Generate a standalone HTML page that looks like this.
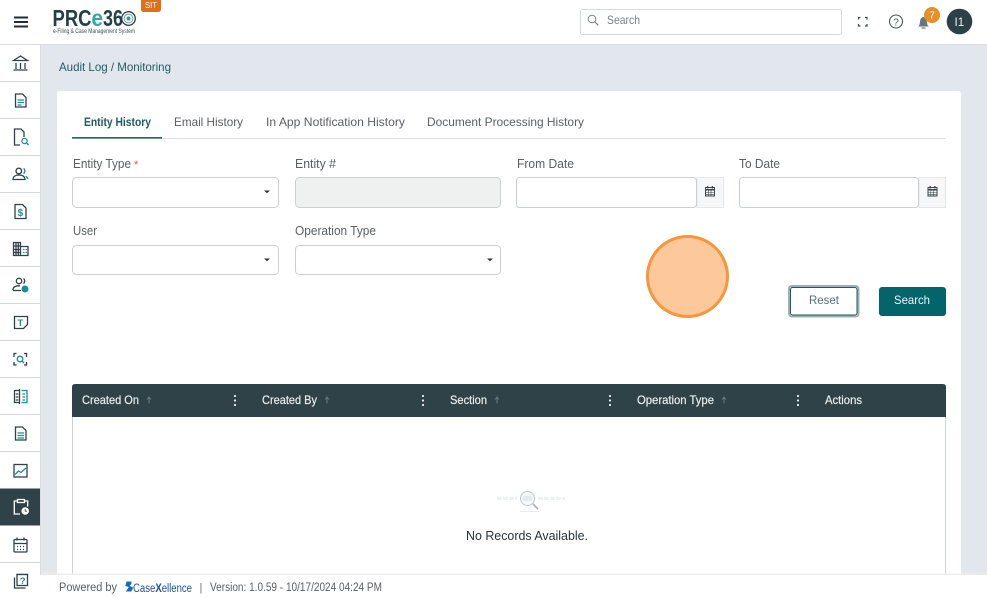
<!DOCTYPE html>
<html><head><meta charset="utf-8"><title>Audit Log / Monitoring</title>
<style>
html,body{margin:0;padding:0;width:987px;height:599px;overflow:hidden;background:#fff}
svg{display:block}
text{font-family:"Liberation Sans",sans-serif}
.l{font-size:12.500px;fill:#5a6063}
.h{font-size:12px;fill:#e8eeee;stroke:#e8eeee;stroke-width:.2}
.i{fill:none;stroke:#2f4247;stroke-width:1.300}
.t{fill:none;stroke:#178f96;stroke-width:1.300}
</style></head><body>
<svg width="987" height="599" viewBox="0 0 987 599" xmlns="http://www.w3.org/2000/svg">
<defs><linearGradient id="fs" x1="0" y1="0" x2="0" y2="1"><stop offset="0" stop-color="#fff" stop-opacity="0"/><stop offset="1" stop-color="#e3e5e8"/></linearGradient></defs>
<rect width="987" height="599" fill="#e2e6ed"/>
<!-- header -->
<rect width="987" height="44" fill="#fff"/><rect y="44" width="987" height="1" fill="#d9dde2"/>
<path d="M14 17.500h14M14 22h14M14 26.500h14" stroke="#222e33" stroke-width="1.900"/>
<text x="52.500" y="26" font-size="23" font-weight="700" fill="#21404a" textLength="39" lengthAdjust="spacingAndGlyphs">PRC</text>
<text x="91.500" y="26" font-size="23" font-weight="700" fill="#31a6a6" textLength="11.500" lengthAdjust="spacingAndGlyphs">e</text>
<text x="103" y="26" font-size="23" font-weight="700" fill="#21404a" textLength="20" lengthAdjust="spacingAndGlyphs">36</text>
<circle cx="128.500" cy="18.500" r="6.800" fill="none" stroke="#21404a" stroke-width="1.300"/><circle cx="128.500" cy="18.500" r="4.400" fill="none" stroke="#7d9ca3" stroke-width="1"/><circle cx="128.500" cy="18.500" r="2.100" fill="#2e9b9d"/>
<text x="53" y="33" font-size="6" fill="#3a5258" textLength="82" lengthAdjust="spacingAndGlyphs">e-Filing &amp; Case Management System</text>
<path d="M141 0h20v9q0 3-3 3h-14q-3 0-3-3z" fill="#df6f1b"/>
<text x="145" y="8" font-size="8" fill="#fff" textLength="12" lengthAdjust="spacingAndGlyphs">SIT</text>
<rect x="580.500" y="9.500" width="261" height="25" rx="2" fill="#fff" stroke="#d6dadd"/>
<circle cx="592" cy="19" r="3.800" fill="none" stroke="#7b8285" stroke-width="1"/><path d="M594.800 21.800l3.500 3.500" stroke="#7b8285" stroke-width="1.200"/>
<text x="607" y="24" font-size="12" fill="#7c7f82" textLength="33" lengthAdjust="spacingAndGlyphs">Search</text>
<path d="M858.500 19.500v-2h2M865 17.500h2v2M867 24v2h-2M860.500 26h-2v-2" fill="none" stroke="#3c4a4f" stroke-width="1.200"/>
<circle cx="896" cy="21.500" r="6.500" fill="none" stroke="#47545a" stroke-width="1.100"/>
<text x="893.300" y="25.300" font-size="10" fill="#47545a">?</text>
<path d="M918 26.500c1.800-1 1.800-3 2-5 .3-2.700 1.800-4.500 3.500-4.500s3.200 1.800 3.500 4.500c.2 2 .2 4 2 5z" fill="#66767c"/><path d="M921.500 28h4" stroke="#66767c" stroke-width="1.200"/>
<circle cx="932" cy="15" r="8" fill="#ea8f25"/><text x="929.300" y="18.500" font-size="10" fill="#fff">7</text>
<circle cx="959.500" cy="21.500" r="12.800" fill="#2b4047"/><text x="954.500" y="26" font-size="11.500" fill="#eef2f2">I1</text>
<!-- sidebar -->
<rect y="45" width="40" height="554" fill="#fff"/><rect x="40" y="45" width="1" height="530" fill="#d8dde3"/>
<path d="M0 81.500h40M0 118.500h40M0 155.500h40M0 192.500h40M0 229.500h40M0 266.500h40M0 303.500h40M0 340.500h40M0 377.500h40M0 414.500h40M0 451.500h40M0 562.500h40" stroke="#d5d8da"/>
<rect y="488.500" width="40" height="37" fill="#2f4247"/>
<path class="i" d="M13.500 60.500L20.500 56l7 4.500zM16 63v6M20.500 63v6M25 63v6M13.500 70h14"/>
<path class="i" d="M15.500 94h7l3.500 3.500V107h-10.500z"/><path class="t" d="M17.500 100h6.500M17.500 102.500h6.500M17.500 105h4"/>
<path class="i" d="M24 137v-5l-3-3h-6.500v16H20"/><circle cx="24.500" cy="141" r="2.600" fill="none" stroke="#178f96" stroke-width="1.300"/><path d="M26.500 143l2 2" stroke="#178f96" stroke-width="1.300"/>
<circle cx="18.800" cy="171" r="2.800" class="i"/><path class="i" d="M13 179.500c0-3 2.500-4.500 6-4.500s5.800 1.500 6 4.500z"/><path class="t" d="M23.500 168.500c1.800.8 1.800 4 0 5M26 176l2 3"/>
<path class="i" d="M15 204.500h7.500l3.500 3.500v10.500H15z"/><text x="17.500" y="216" font-size="10" font-weight="700" fill="#178f96">$</text>
<path class="i" d="M13.500 242.500h7v13h-7zM20.500 246.500h7.500v9h-7.500M16 243v12M18.300 243v12M13.500 246h7M13.500 249.500h7M13.500 252.500h7"/><path class="t" d="M23 249.500h1.500M25.500 249.500H27M23 252.500h1.500M25.500 252.500H27"/>
<circle cx="19" cy="281" r="2.700" class="i"/><path class="i" d="M13 290c0-3 3-4.300 7-4.300M13 290.500h8"/><path class="i" d="M23.500 278.500c1.500 1 1.500 4 0 5"/><circle cx="25" cy="289" r="3.500" fill="#178f96"/>
<path class="i" d="M14.500 316.500h13v8l-4 4h-9z"/><text x="17.500" y="326" font-size="9.500" font-weight="700" fill="#178f96">T</text>
<path class="i" d="M16.500 353.500h-2.500v3.500M24 353.500h2.500v3.500M14 362v3h2.500M26.500 362v3H24" stroke-width="1.500"/><circle cx="20" cy="359" r="2.800" fill="none" stroke="#178f96" stroke-width="1.300"/><path d="M22 361l2 2" stroke="#178f96" stroke-width="1.300"/>
<path class="i" d="M19.500 390.500h-5v12h5M19.500 389v15"/><path class="t" d="M21.500 390.500h5.500v12h-5.500"/><path class="i" d="M15.800 394h2.500M15.800 397h2.500M15.800 400h2.500"/><path class="t" d="M22.500 394H25M22.500 397H25M22.500 400H25"/>
<path class="i" d="M15.500 427h7l3.500 3.500V440h-10.500z"/><path class="t" d="M17.500 433h6.500M17.500 435.500h6.500M17.500 438h6.500"/>
<rect x="14" y="464.500" width="13" height="12.500" class="i"/><path class="t" d="M15 474.500l3.500-3.500 2.500 1.500 5-4.500"/>
<path d="M17 501h-2.700v13H20M25 501h2.700v5.500M17.500 499.500h7v3h-7z" fill="none" stroke="#fff" stroke-width="1.300"/><circle cx="25.200" cy="511" r="3.800" fill="#fff"/><path d="M25.200 509v2.200h1.700" fill="none" stroke="#2f4247" stroke-width=".8"/>
<rect x="14" y="539.500" width="13" height="12.500" rx="1" class="i"/><path class="i" d="M14 543.500h13M17 537.500v3M24 537.500v3M17 546.500h1M20 546.500h1M23 546.500h1M17 549.500h1M20 549.500h1M23 549.500h1"/>
<rect x="17" y="574.500" width="10.500" height="11" class="i"/><path class="i" d="M14.500 577.500v10.500h11"/><text x="19.800" y="584" font-size="9.500" font-weight="700" fill="#178f96">?</text>
<!-- content -->
<text x="59" y="71" font-size="12" fill="#1f5c66" textLength="112" lengthAdjust="spacingAndGlyphs">Audit Log / Monitoring</text>
<rect x="57" y="91" width="904" height="520" rx="3" fill="#fff"/>
<!-- tabs -->
<rect x="72" y="138" width="874" height="1" fill="#dfe3e5"/><rect x="72" y="137" width="90" height="1.600" fill="#1d6a6c"/>
<text x="84" y="126" font-size="12" font-weight="700" fill="#1f5c5f" textLength="67" lengthAdjust="spacingAndGlyphs">Entity History</text>
<text x="174" y="126" font-size="12" fill="#5a6063" textLength="69" lengthAdjust="spacingAndGlyphs">Email History</text>
<text x="266" y="126" font-size="12" fill="#5a6063" textLength="139" lengthAdjust="spacingAndGlyphs">In App Notification History</text>
<text x="427" y="126" font-size="12" fill="#5a6063" textLength="157" lengthAdjust="spacingAndGlyphs">Document Processing History</text>
<!-- labels -->
<text class="l" x="73" y="168" textLength="58" lengthAdjust="spacingAndGlyphs">Entity Type</text><text x="134" y="168" font-size="11" fill="#d9534f">*</text>
<text class="l" x="295" y="168" textLength="41" lengthAdjust="spacingAndGlyphs">Entity #</text>
<text class="l" x="517" y="168" textLength="57" lengthAdjust="spacingAndGlyphs">From Date</text>
<text class="l" x="739" y="168" textLength="41" lengthAdjust="spacingAndGlyphs">To Date</text>
<text class="l" x="73" y="235" textLength="24" lengthAdjust="spacingAndGlyphs">User</text>
<text class="l" x="295" y="235" textLength="81" lengthAdjust="spacingAndGlyphs">Operation Type</text>
<!-- inputs -->
<g stroke="#ccd0d2" fill="#fff">
<rect x="72.500" y="177.500" width="206" height="30" rx="4"/>
<rect x="295.500" y="177.500" width="205" height="30" rx="4" fill="#eff0f0"/>
<rect x="72.500" y="245.500" width="206" height="29" rx="4"/>
<rect x="295.500" y="245.500" width="205" height="29" rx="4"/>
<rect x="697" y="177.500" width="26.500" height="30" fill="#f6f7f9" stroke="#e4e7ea"/>
<rect x="919" y="177.500" width="26.500" height="30" fill="#f6f7f9" stroke="#e4e7ea"/>
<rect x="516.500" y="177.500" width="180" height="30" rx="3"/>
<rect x="739.500" y="177.500" width="179" height="30" rx="3"/>
</g>
<path d="M264 190.500h6l-3 2.800zM264 258.500h6l-3 2.800zM487 258.500h6l-3 2.800z" fill="#2b3336"/>
<g><path d="M705.500 187.500h9v8.500h-9z" fill="none" stroke="#3d474b"/><path d="M705.500 189h9v1.500h-9zM707 186h1.300v2.500H707zM711.700 186h1.300v2.500h-1.300z" fill="#3d474b"/><path d="M705.500 192.500h9M705.500 194.300h9M708.300 190.500v5.500M711 190.500v5.500" stroke="#3d474b" stroke-width=".6"/></g>
<g transform="translate(222.500 0)"><path d="M705.500 187.500h9v8.500h-9z" fill="none" stroke="#3d474b"/><path d="M705.500 189h9v1.500h-9zM707 186h1.300v2.500H707zM711.700 186h1.300v2.500h-1.300z" fill="#3d474b"/><path d="M705.500 192.500h9M705.500 194.300h9M708.300 190.500v5.500M711 190.500v5.500" stroke="#3d474b" stroke-width=".6"/></g>
<!-- circle -->
<circle cx="687.500" cy="276.500" r="40" fill="#fdc89a" stroke="#f6963f" stroke-width="3"/>
<!-- buttons -->
<rect x="789" y="286" width="69.500" height="30.500" rx="3" fill="#fff" stroke="#9fb0b5" stroke-width="2"/>
<rect x="790.500" y="287.500" width="66.500" height="27.500" rx="2" fill="#fff" stroke="#1d5d5e"/>
<text x="809" y="304" font-size="12" fill="#4a7577" textLength="30" lengthAdjust="spacingAndGlyphs">Reset</text>
<rect x="879" y="287" width="67" height="29" rx="3" fill="#03656a"/>
<text x="894" y="304" font-size="12" fill="#f0f6f6" textLength="36" lengthAdjust="spacingAndGlyphs">Search</text>
<!-- table -->
<path d="M72.500 417v170M945.500 417v170" stroke="#cdd2d5"/>
<path d="M72 417v-30q0-3 3-3h868q3 0 3 3v30z" fill="#2f4247"/>
<text class="h" x="82" y="404" textLength="57" lengthAdjust="spacingAndGlyphs">Created On</text>
<text class="h" x="262" y="404" textLength="55" lengthAdjust="spacingAndGlyphs">Created By</text>
<text class="h" x="450" y="404" textLength="37" lengthAdjust="spacingAndGlyphs">Section</text>
<text class="h" x="637" y="404" textLength="77" lengthAdjust="spacingAndGlyphs">Operation Type</text>
<text class="h" x="825" y="404" textLength="37" lengthAdjust="spacingAndGlyphs">Actions</text>
<path d="M149 403.500v-6M147 399.500l2-2.500 2 2.500M327 403.500v-6M325 399.500l2-2.500 2 2.500M497 403.500v-6M495 399.500l2-2.500 2 2.500M724 403.500v-6M722 399.500l2-2.500 2 2.500" fill="none" stroke="#6b7b80"/>
<g fill="#e8eeee"><circle cx="235" cy="396" r="1.100"/><circle cx="235" cy="400.500" r="1.100"/><circle cx="235" cy="405" r="1.100"/><circle cx="423" cy="396" r="1.100"/><circle cx="423" cy="400.500" r="1.100"/><circle cx="423" cy="405" r="1.100"/><circle cx="610" cy="396" r="1.100"/><circle cx="610" cy="400.500" r="1.100"/><circle cx="610" cy="405" r="1.100"/><circle cx="798" cy="396" r="1.100"/><circle cx="798" cy="400.500" r="1.100"/><circle cx="798" cy="405" r="1.100"/></g>
<!-- empty -->
<path d="M497 498.500h20M538 498.500h27" stroke="#f0f1f3" stroke-width="3" stroke-dasharray="5 1"/>
<circle cx="527.500" cy="498.500" r="7" fill="#f7f8fa" stroke="#bcc7cc"/><rect x="523" y="496" width="9" height="5" fill="#e6eaed"/><path d="M533 504l5 5" stroke="#a9b2b6" stroke-width="1.600"/><path d="M520 511.500h19" stroke="#e9ebed"/>
<text x="466" y="540" font-size="12.500" fill="#2a3338" textLength="122" lengthAdjust="spacingAndGlyphs">No Records Available.</text>
<!-- footer -->
<rect x="41" y="572" width="946" height="3" fill="url(#fs)"/>
<rect x="0" y="575" width="987" height="24" fill="#fff"/>
<rect x="40" y="45" width="1" height="530" fill="#d8dde3"/>
<rect y="562" width="40" height="1" fill="#d5d8da"/>
<rect x="17" y="574.500" width="10.500" height="11" class="i"/><path class="i" d="M14.500 577.500v10.500h11"/><text x="19.800" y="584" font-size="9.500" font-weight="700" fill="#178f96">?</text>
<text x="59" y="591" font-size="11.500" fill="#5a6063" textLength="58" lengthAdjust="spacingAndGlyphs">Powered by</text>
<path d="M131.500 581.500h-5l-1.200 4.500 3.500 1-3 4.500h5.500l2-4-3.500-1.500 1.700-2.500z" fill="#0f6fc4"/>
<text x="133" y="592" font-size="11.500" fill="#1d4f9c" textLength="59" lengthAdjust="spacingAndGlyphs">Case<tspan font-weight="700">X</tspan>ellence</text>
<text x="199.500" y="591" font-size="11" fill="#6b7276">|</text>
<text x="210" y="591" font-size="11.500" fill="#5a6063" textLength="172" lengthAdjust="spacingAndGlyphs">Version: 1.0.59 - 10/17/2024 04:24 PM</text>
</svg>
</body></html>
